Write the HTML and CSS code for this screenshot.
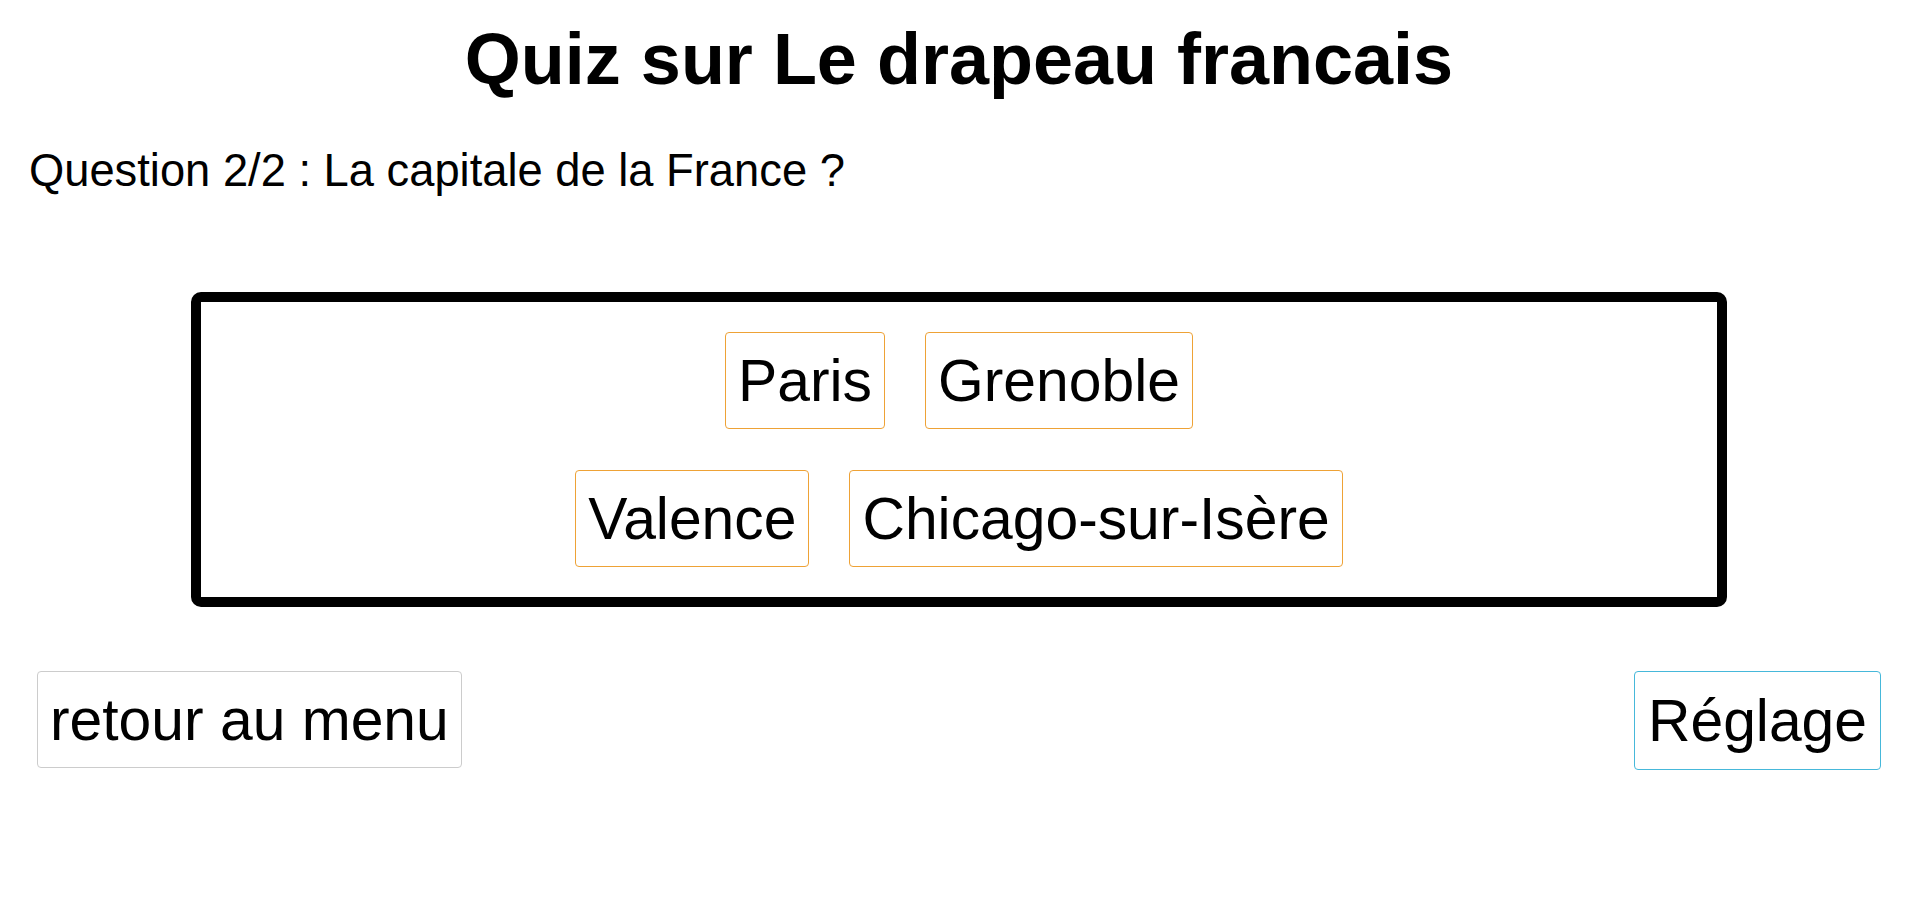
FILE: index.html
```html
<!DOCTYPE html>
<html lang="fr">
<head>
<meta charset="utf-8">
<title>Quiz sur Le drapeau francais</title>
<link rel="stylesheet" href="styles.css">
</head>
<body>
<div class="page">
  <h1 class="title">Quiz sur Le drapeau francais</h1>
  <p class="question">Question 2/2 : La capitale de la France ?</p>
  <div class="board">
    <div class="row">
      <button class="btn answer">Paris</button>
      <button class="btn answer">Grenoble</button>
    </div>
    <div class="row">
      <button class="btn answer">Valence</button>
      <button class="btn answer">Chicago-sur-Isère</button>
    </div>
  </div>
  <div class="footer">
    <button class="btn menu">retour au menu</button>
    <button class="btn settings">Réglage</button>
  </div>
</div>
</body>
</html>
```
FILE: styles.css
```css
html, body {
  margin: 0;
  padding: 0;
  background: #fff;
}

body {
  font-family: "Liberation Sans", Arial, Helvetica, sans-serif;
  color: #000;
}

.page {
  padding: 18px 0 0 12px;
}

.title {
  margin: 0;
  font-size: 72px;
  font-weight: bold;
  line-height: normal;
  text-align: center;
}

.question {
  margin: 45px 0 0 17px;
  font-size: 45.3px;
  line-height: normal;
}

.board {
  box-sizing: border-box;
  width: 1536px;
  margin: 95px 0 0 179px;
  border: 10px solid #000;
  border-radius: 10px;
  padding: 30px 0;
  display: flex;
  flex-direction: column;
  gap: 41px;
}

.row {
  display: flex;
  justify-content: center;
  gap: 40px;
}

.btn {
  font-family: "Liberation Sans", Arial, Helvetica, sans-serif;
  font-size: 58.8px;
  line-height: 83px;
  padding: 6px 12px;
  margin: 0;
  border: 1px solid #ccc;
  border-radius: 4px;
  background: #fff;
  color: #000;
  cursor: pointer;
}

.answer {
  border-color: #eea236;
}

.menu {
  border-color: #ccc;
}

.settings {
  border-color: #46b8da;
  padding: 7px 13px;
}

.footer {
  display: flex;
  justify-content: space-between;
  align-items: flex-start;
  margin-top: 64px;
  padding: 0 25px 0 25px;
}
```
